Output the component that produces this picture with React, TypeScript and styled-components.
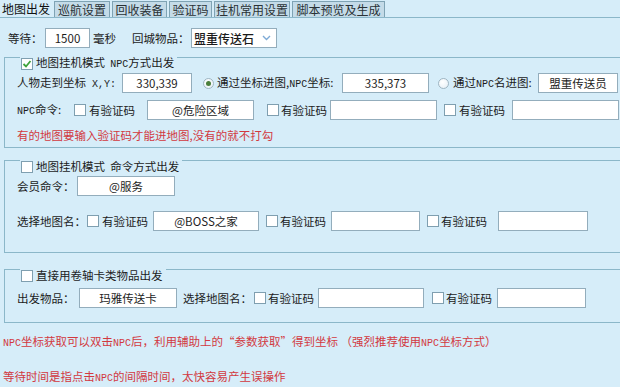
import * as React from "react";
import styled, { createGlobalStyle } from "styled-components";

const Bg = "#d6edf9";
const LineColor = "#8bb7c9";
const FieldBorder = "#93adbc";
const Red = "#d2393f";

const GlobalStyle = createGlobalStyle`
    html, body {
        margin: 0;
        padding: 0;
        background: ${Bg};
    }
    body {
        font-family: "Noto Sans CJK SC", "Noto Sans", sans-serif;
        font-size: 11.5px;
        color: #1c1c1c;
    }
`;

const Page = styled.div`
    width: 620px;
    height: 387px;
    overflow: hidden;
    background: ${Bg};
`;

const TabBar = styled.div`
    display: flex;
    align-items: flex-end;
    gap: 2px;
    height: 17px;
    border-bottom: 1px solid ${LineColor};
`;

const Tab = styled.div<{ w: number; active?: boolean }>`
    width: ${p => p.w}px;
    height: ${p => (p.active ? 17 : 16)}px;
    box-sizing: border-box;
    display: flex;
    align-items: center;
    justify-content: center;
    font-size: 12px;
    line-height: 14px;
    white-space: nowrap;
    background: ${p => (p.active ? Bg : "#c4dbe8")};
    color: ${p => (p.active ? "#111" : "#2a3236")};
    border: ${p => (p.active ? "none" : "1px solid #7fa3b4")};
    border-bottom: none;
`;

const TopRow = styled.div`
    display: flex;
    align-items: center;
    height: 20px;
    margin-top: 10px;
    padding-left: 8px;
`;

const GroupBox = styled.div<{ mt: number; pb: number }>`
    width: 640px;
    box-sizing: border-box;
    margin: ${p => p.mt}px 0 0 4px;
    padding: 0 0 ${p => p.pb}px 12px;
    border: 1px solid ${LineColor};
`;

const Caption = styled.div`
    display: flex;
    align-items: center;
    width: fit-content;
    height: 13px;
    margin: -1px 0 0 3px;
    padding: 0 3px 0 1px;
    background: ${Bg};
    line-height: 13px;
    white-space: nowrap;
`;

const CaptionText = styled.span`
    margin-left: 3px;
`;

const Row = styled.div<{ mt: number }>`
    display: flex;
    align-items: center;
    height: 20px;
    margin-top: ${p => p.mt}px;
`;

const Label = styled.span<{ w?: number; ml?: number }>`
    display: inline-block;
    width: ${p => (p.w ? `${p.w}px` : "auto")};
    margin-left: ${p => p.ml ?? 0}px;
    line-height: 14px;
    white-space: nowrap;
    flex-shrink: 0;
`;

// latin bits in the original are a narrow fixed-width face
const Latin = styled.span`
    font-family: "Liberation Mono", monospace;
    font-size: 10px;
`;

const Field = styled.input<{ w: number; ml?: number }>`
    width: ${p => p.w}px;
    height: 20px;
    margin: 0 0 0 ${p => p.ml ?? 0}px;
    padding: 0;
    box-sizing: border-box;
    border: 1px solid ${FieldBorder};
    background: #fff;
    font: inherit;
    font-size: 11.5px;
    color: #1c1c1c;
    text-align: center;
    flex-shrink: 0;
    &:focus {
        outline: none;
    }
`;

const Select = styled.div<{ w: number }>`
    display: flex;
    align-items: center;
    justify-content: space-between;
    width: ${p => p.w}px;
    height: 20px;
    box-sizing: border-box;
    padding: 0 5px 0 2px;
    border: 1px solid ${FieldBorder};
    background: #fff;
    font-size: 12px;
    font-weight: 500;
`;

const Box = styled.span<{ ml?: number }>`
    display: inline-flex;
    align-items: center;
    justify-content: center;
    width: 12px;
    height: 12px;
    box-sizing: border-box;
    margin-left: ${p => p.ml ?? 0}px;
    border: 1px solid #7f9fb0;
    background: #fff;
    flex-shrink: 0;
`;

const Radio = styled.span<{ ml?: number; on?: boolean }>`
    display: inline-flex;
    align-items: center;
    justify-content: center;
    width: 11px;
    height: 11px;
    box-sizing: border-box;
    margin-left: ${p => p.ml ?? 0}px;
    border: 1px solid #9fb5c2;
    border-radius: 50%;
    background: radial-gradient(circle at 40% 35%, #ffffff, #e3eef5);
    flex-shrink: 0;
    &::after {
        content: "";
        width: 5px;
        height: 5px;
        border-radius: 50%;
        background: ${p => (p.on ? "#4b7f3c" : "transparent")};
    }
`;

const Note = styled.div<{ mt: number }>`
    margin-top: ${p => p.mt}px;
    padding-left: 3px;
    line-height: 14px;
    color: ${Red};
    white-space: nowrap;
`;

const GroupNote = styled.div`
    margin-top: 8px;
    line-height: 14px;
    color: ${Red};
    white-space: nowrap;
`;

const Check = ({ on, ml }: { on?: boolean; ml?: number }) => (
    <Box ml={ml}>
        {on && (
            <svg width="10" height="10" viewBox="0 0 10 10">
                <polyline points="1.5,5 4,7.5 8.5,2" fill="none" stroke="#3ea33b" strokeWidth="1.8" />
            </svg>
        )}
    </Box>
);

const Chevron = () => (
    <svg width="9" height="6" viewBox="0 0 9 6">
        <polyline points="1,1 4.5,4.5 8,1" fill="none" stroke="#7eaad6" strokeWidth="1.4" />
    </svg>
);

const tabs: [string, number][] = [
    ["地图出发", 52],
    ["巡航设置", 56],
    ["回收装备", 55],
    ["验证码", 43],
    ["挂机常用设置", 76],
    ["脚本预览及生成", 93],
];

export default function App() {
    return (
        <Page>
            <GlobalStyle />
            <TabBar>
                {tabs.map(([name, w], i) => (
                    <Tab key={name} w={w} active={i === 0}>{name}</Tab>
                ))}
            </TabBar>

            <TopRow>
                <Label w={37}>等待：</Label>
                <Field w={45} defaultValue="1500" readOnly />
                <Label ml={3}>毫秒</Label>
                <Label ml={16} w={59}>回城物品：</Label>
                <Select w={86}>
                    <span>盟重传送石</span>
                    <Chevron />
                </Select>
            </TopRow>

            <GroupBox mt={9} pb={5}>
                <Caption>
                    <Check on />
                    <CaptionText>地图挂机模式&nbsp;&nbsp;<Latin>NPC</Latin>方式出发</CaptionText>
                </Caption>
                <Row mt={3}>
                    <Label w={100}>人物走到坐标<Latin> X,Y:</Latin></Label>
                    <Field w={70} ml={5} defaultValue="330,339" readOnly />
                    <Radio ml={11} on />
                    <Label ml={3} w={124}>通过坐标进图,<Latin>NPC</Latin>坐标:</Label>
                    <Field w={87} ml={1} defaultValue="335,373" readOnly />
                    <Radio ml={9} />
                    <Label ml={4} w={84}>通过<Latin>NPC</Latin>名进图:</Label>
                    <Field w={80} ml={1} defaultValue="盟重传送员" readOnly />
                </Row>
                <Row mt={7}>
                    <Label w={56}><Latin>NPC</Latin>命令:</Label>
                    <Check ml={1} />
                    <Label ml={3} w={48}>有验证码</Label>
                    <Field w={107} ml={10} defaultValue="@危险区域" readOnly />
                    <Check ml={13} />
                    <Label ml={2} w={48}>有验证码</Label>
                    <Field w={107} ml={1} readOnly />
                    <Check ml={7} />
                    <Label ml={3} w={48}>有验证码</Label>
                    <Field w={107} ml={5} readOnly />
                </Row>
                <GroupNote>有的地图要输入验证码才能进地图,没有的就不打勾</GroupNote>
            </GroupBox>

            <GroupBox mt={12} pb={21}>
                <Caption>
                    <Check />
                    <CaptionText>地图挂机模式&nbsp;&nbsp;命令方式出发</CaptionText>
                </Caption>
                <Row mt={3}>
                    <Label w={60}>会员命令：</Label>
                    <Field w={98} defaultValue="@服务" readOnly />
                </Row>
                <Row mt={15}>
                    <Label w={70}>选择地图名：</Label>
                    <Check />
                    <Label ml={3} w={48}>有验证码</Label>
                    <Field w={106} ml={3} defaultValue="@BOSS之家" readOnly />
                    <Check ml={7} />
                    <Label ml={2} w={48}>有验证码</Label>
                    <Field w={89} ml={3} readOnly />
                    <Check ml={7} />
                    <Label ml={2} w={48}>有验证码</Label>
                    <Field w={90} ml={9} readOnly />
                </Row>
            </GroupBox>

            <GroupBox mt={16} pb={14}>
                <Caption>
                    <Check />
                    <CaptionText>直接用卷轴卡类物品出发</CaptionText>
                </Caption>
                <Row mt={6}>
                    <Label w={62}>出发物品：</Label>
                    <Field w={98} defaultValue="玛雅传送卡" readOnly />
                    <Label ml={6} w={70}>选择地图名：</Label>
                    <Check ml={1} />
                    <Label ml={2} w={48}>有验证码</Label>
                    <Field w={106} ml={2} readOnly />
                    <Check ml={8} />
                    <Label ml={2} w={48}>有验证码</Label>
                    <Field w={89} ml={3} readOnly />
                </Row>
            </GroupBox>

            <Note mt={11}><Latin>NPC</Latin>坐标获取可以双击<Latin>NPC</Latin>后，利用辅助上的“参数获取”得到坐标 （强烈推荐使用<Latin>NPC</Latin>坐标方式）</Note>
            <Note mt={18}>等待时间是指点击<Latin>NPC</Latin>的间隔时间，太快容易产生误操作</Note>
        </Page>
    );
}
